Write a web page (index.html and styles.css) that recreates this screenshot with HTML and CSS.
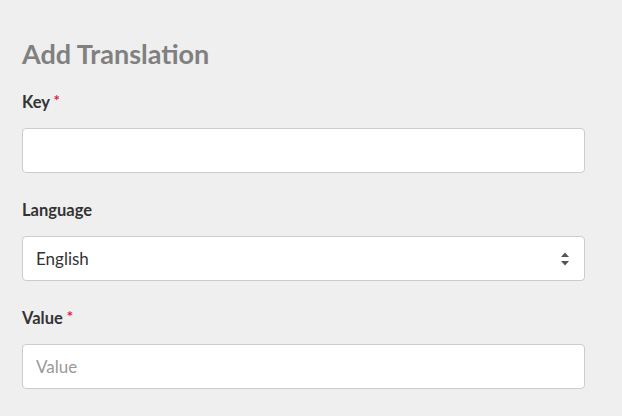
FILE: index.html
```html
<!DOCTYPE html>
<html lang="en">
<head>
    <meta charset="UTF-8">
    <meta name="viewport" content="width=device-width, initial-scale=1.0">
    <title>Add Translation</title>
    <link rel="stylesheet" href="styles.css">
</head>
<body>

<div class="container">
    <h1>Add Translation</h1>
    <form class="form">
        <div class="field">
            <label for="key">Key <span class="required">*</span></label>
            <input type="text" id="key" class="input">
        </div>

        <div class="field">
            <label for="language">Language</label>
            <div class="select-wrap">
                <select id="language" class="input select">
                    <option value="en">English</option>
                    <option value="es">Spanish</option>
                    <option value="fr">French</option>
                </select>
                <svg class="select-arrows" width="10" height="16" viewBox="0 0 10 16">
                    <path d="M5 1.5 L9 6 L1 6 Z" fill="#555"/>
                    <path d="M5 14.5 L9 10 L1 10 Z" fill="#555"/>
                </svg>
            </div>
        </div>

        <div class="field">
            <label for="value">Value <span class="required">*</span></label>
            <input type="text" id="value" class="input" placeholder="Value">
        </div>
    </form>
</div>

</body>
</html>
```

FILE: styles.css
```css
body {
    font-family: Lato, "Liberation Sans", sans-serif;
    background-color: #efefef;
    margin: 0;
    padding: 0;
}
.container {
    width: 563px;
    padding: 36px 22px 0 22px;
}
h1 {
    margin: 0 0 20px 0;
    font-size: 27px;
    font-weight: 700;
    color: #808080;
    line-height: 36px;
}
.form {
    display: flex;
    flex-direction: column;
    gap: 27px;
}
.field {
    display: flex;
    flex-direction: column;
    gap: 16px;
}
label {
    font-size: 16.5px;
    font-weight: 700;
    color: #333;
    line-height: 20px;
    height: 20px;
}
.required {
    color: #e8174a;
    font-size: 15px;
    line-height: 0;
    vertical-align: 2px;
}
.input {
    box-sizing: border-box;
    width: 100%;
    height: 45px;
    padding: 0 13px;
    border: 1px solid #ccc;
    border-radius: 4px;
    background: white;
    font-family: inherit;
    font-size: 17px;
    color: #333;
    outline: none;
}
.input::placeholder {
    color: #999;
}
.select-wrap {
    position: relative;
}
.select {
    appearance: none;
    -webkit-appearance: none;
}
.select-arrows {
    position: absolute;
    right: 15px;
    top: 15px;
    pointer-events: none;
}
```
